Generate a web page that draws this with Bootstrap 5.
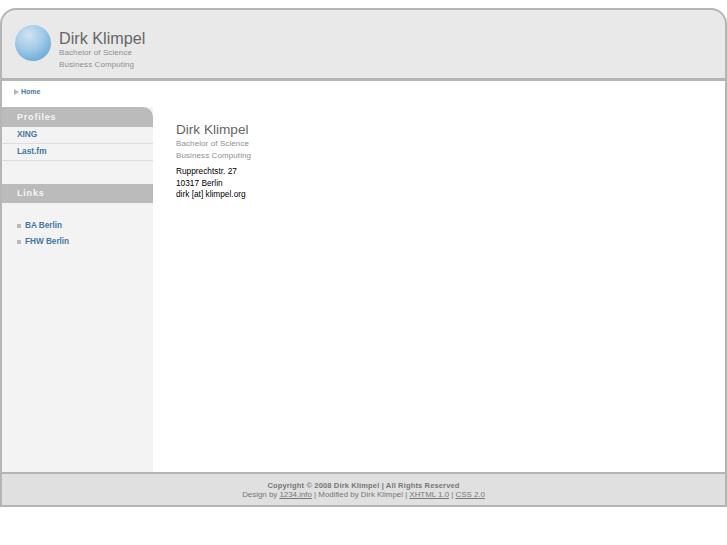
<!DOCTYPE html>
<html lang="de">
<head>
    <meta charset="UTF-8">
    <meta name="viewport" content="width=device-width, initial-scale=1.0">
    <title>Dirk Klimpel</title>
    <link href="https://cdn.jsdelivr.net/npm/bootstrap@5.3.0/dist/css/bootstrap.min.css" rel="stylesheet">
    <style>
        body {
            background-color: #fff;
            font-family: "Liberation Sans", Arial, sans-serif;
            font-size: 8.3px;
            line-height: 11px;
            color: #000;
        }
        .page-box {
            margin-top: 8px;
            height: 499px;
        }
        .site-head {
            height: 73px;
            background-color: #e9e9e9;
            border: 2px solid #b5b5b5;
            border-bottom-width: 3px;
            border-radius: 16px 16px 0 0;
            padding-left: 13px;
            gap: 8px;
        }
        .ball {
            width: 36px;
            height: 36px;
            border-radius: 50%;
            background: radial-gradient(circle at 38% 28%, #cfe3f3 0, #a5cce8 40%, #66a6d6 85%, #5a9bcb 100%);
            margin-top: 15px;
        }
        .site-title {
            padding-top: 19px;
        }
        .site-title h1 {
            font-size: 16.2px;
            line-height: 18px;
            font-weight: 400;
            color: #666;
            margin: 0;
        }
        .intro h2 {
            font-size: 13.6px;
            line-height: 16px;
            font-weight: 400;
            color: #666;
            margin: 0;
        }
        .site-title p, .intro p.sub {
            font-size: 8px;
            line-height: 12px;
            letter-spacing: .1px;
            color: #8f8f8f;
            margin: 0;
        }
        .middle {
            border-left: 2px solid #b5b5b5;
            border-right: 2px solid #b5b5b5;
            height: 391px;
        }
        .crumb {
            height: 26px;
            padding: 5px 0 0 12px;
            font-size: 7px;
            font-weight: 700;
            gap: 2px;
        }
        .crumb a, .side-list a, .link-box a {
            color: #4576a6;
            text-decoration: none;
            font-weight: 700;
        }
        .crumb-arrow {
            width: 0;
            height: 0;
            margin-top: 3px;
            border-left: 5px solid #b5b5b5;
            border-top: 3px solid transparent;
            border-bottom: 3px solid transparent;
        }
        .side {
            width: 151px;
            height: 365px;
            background-color: #f3f3f3;
        }
        .side-head {
            height: 19px;
            line-height: 19px;
            background-color: #bbb;
            color: #f5f5f5;
            font-size: 9px;
            font-weight: 700;
            letter-spacing: .8px;
            padding-left: 15px;
        }
        .side-head.first {
            height: 20px;
            line-height: 20px;
            border-top-right-radius: 10px;
        }
        .side-list {
            margin-bottom: 23px;
        }
        .side-list a {
            display: block;
            height: 17px;
            line-height: 15px;
            padding-left: 15px;
            font-size: 8.3px;
            border-bottom: 1px solid #ddd;
        }
        .link-box {
            padding-top: 15px;
        }
        .link-box div {
            height: 16px;
            line-height: 14px;
            padding-left: 15px;
            gap: 4px;
        }
        .link-box a {
            font-size: 8.2px;
        }
        .dot {
            width: 4px;
            height: 4px;
            background-color: #bbb;
        }
        .intro {
            padding: 15px 0 0 23px;
        }
        .intro p.addr {
            margin: 4px 0 0;
            line-height: 11.5px;
        }
        .site-foot {
            height: 35px;
            background-color: #e0e0e0;
            border: 2px solid #b5b5b5;
            text-align: center;
            font-size: 7.9px;
            line-height: 9px;
            color: #777;
            padding-top: 7px;
        }
        .site-foot strong {
            font-size: 7.5px;
            letter-spacing: .15px;
        }
        .site-foot a {
            color: #777;
        }
    </style>
</head>
<body>
    <div class="page-box">
        <div class="site-head d-flex">
            <div class="ball flex-shrink-0"></div>
            <div class="site-title">
                <h1>Dirk Klimpel</h1>
                <p>Bachelor of Science</p>
                <p>Business Computing</p>
            </div>
        </div>
        <div class="middle">
            <div class="crumb d-flex align-items-start">
                <span class="crumb-arrow"></span>
                <a href="#">Home</a>
            </div>
            <div class="d-flex">
                <div class="side flex-shrink-0">
                    <div class="side-head first">Profiles</div>
                    <div class="side-list">
                        <a href="#">XING</a>
                        <a href="#">Last.fm</a>
                    </div>
                    <div class="side-head">Links</div>
                    <div class="link-box">
                        <div class="d-flex align-items-center"><span class="dot"></span><a href="#">BA Berlin</a></div>
                        <div class="d-flex align-items-center"><span class="dot"></span><a href="#">FHW Berlin</a></div>
                    </div>
                </div>
                <div class="intro">
                    <h2>Dirk Klimpel</h2>
                    <p class="sub">Bachelor of Science</p>
                    <p class="sub">Business Computing</p>
                    <p class="addr">Rupprechtstr. 27<br>10317 Berlin<br>dirk [at] klimpel.org</p>
                </div>
            </div>
        </div>
        <div class="site-foot">
            <strong>Copyright © 2008 Dirk Klimpel | All Rights Reserved</strong><br>
            Design by <a href="#">1234.info</a> | Modified by Dirk Klimpel | <a href="#">XHTML 1.0</a> | <a href="#">CSS 2.0</a>
        </div>
    </div>
    <script src="https://cdn.jsdelivr.net/npm/bootstrap@5.3.0/dist/js/bootstrap.bundle.min.js"></script>
</body>
</html>
